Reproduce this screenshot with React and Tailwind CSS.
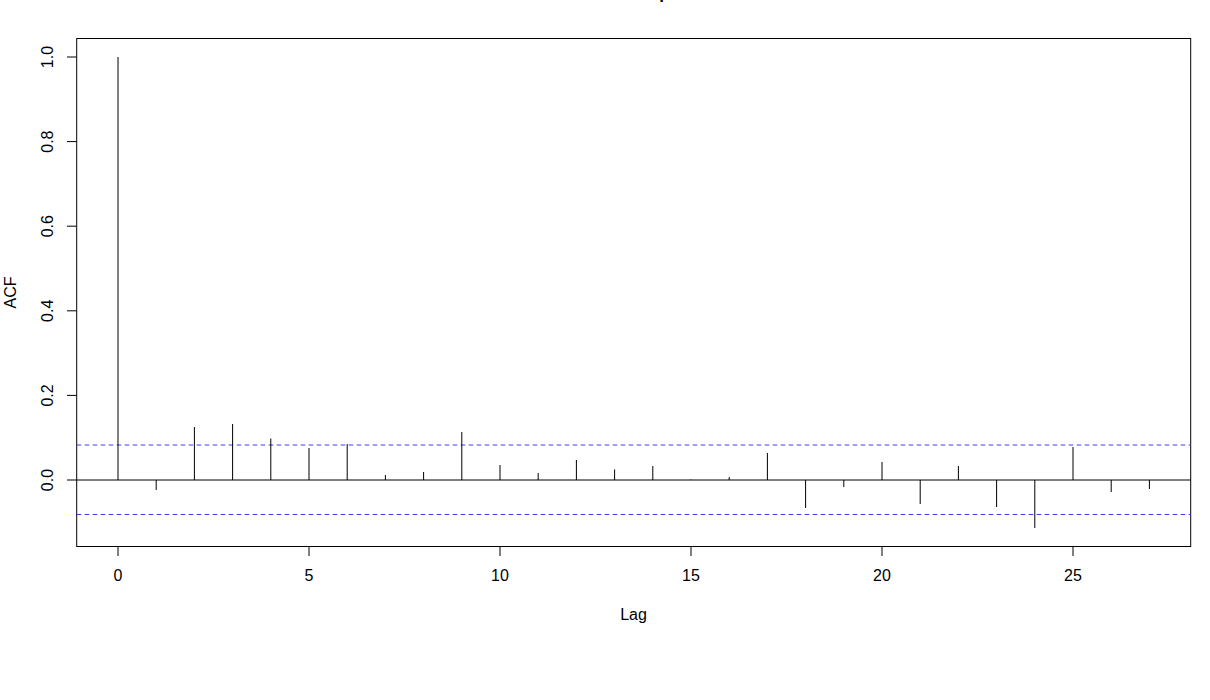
import React from 'react';

// pixel y of the tip of each lag's bar, lag 0 to 27
const barTips = [57, 490, 427, 424, 438.5, 448, 444, 475, 472, 432, 465, 473, 460, 469.5, 466, 479.5, 477, 453, 508, 487, 462, 504, 466, 507, 528, 447, 492, 489];
const xTicks = [0, 5, 10, 15, 20, 25];
const yTicks = ['0.0', '0.2', '0.4', '0.6', '0.8', '1.0'];

const lagX = (lag) => 118 + 38.2 * lag;
const acfY = (value) => 480 - 423 * value;

function AcfChart() {
  return (
    <svg width="1210" height="700" viewBox="0 0 1210 700" className="block text-[16px] [font-family:'Liberation_Sans',Arial,sans-serif]">
      <text x="524" y="-1.5" fontWeight="700" fontSize="17">Series  resid.sample.dataset</text>

      <rect x="76.7" y="38.5" width="1114" height="508" fill="none" stroke="#000" strokeWidth="1" />

      <line x1="76.7" x2="1190.7" y1="480" y2="480" stroke="#000" strokeWidth="1" />
      <line x1="76.7" x2="1190.7" y1="445" y2="445" stroke="#3a3aff" strokeWidth="1" strokeDasharray="4.5 3.5" />
      <line x1="76.7" x2="1190.7" y1="514.5" y2="514.5" stroke="#3a3aff" strokeWidth="1" strokeDasharray="4.5 3.5" />

      {barTips.map((tip, lag) => (
        <line key={lag} x1={lagX(lag)} x2={lagX(lag)} y1="480" y2={tip} stroke="#000" strokeWidth="1" />
      ))}

      {xTicks.map((lag) => (
        <g key={lag}>
          <line x1={lagX(lag)} x2={lagX(lag)} y1="546.5" y2="556" stroke="#000" strokeWidth="1" />
          <text x={lagX(lag)} y="581" textAnchor="middle">{lag}</text>
        </g>
      ))}

      {yTicks.map((label) => (
        <g key={label}>
          <line x1="67" x2="76.7" y1={acfY(Number(label))} y2={acfY(Number(label))} stroke="#000" strokeWidth="1" />
          <text transform={`translate(53 ${acfY(Number(label))}) rotate(-90)`} textAnchor="middle">{label}</text>
        </g>
      ))}

      <text x="633.5" y="620" textAnchor="middle">Lag</text>
      <text transform="translate(16 292.5) rotate(-90)" textAnchor="middle">ACF</text>
    </svg>
  );
}

export default function App() {
  return (
    <div className="min-h-screen bg-white">
      <AcfChart />
    </div>
  );
}
